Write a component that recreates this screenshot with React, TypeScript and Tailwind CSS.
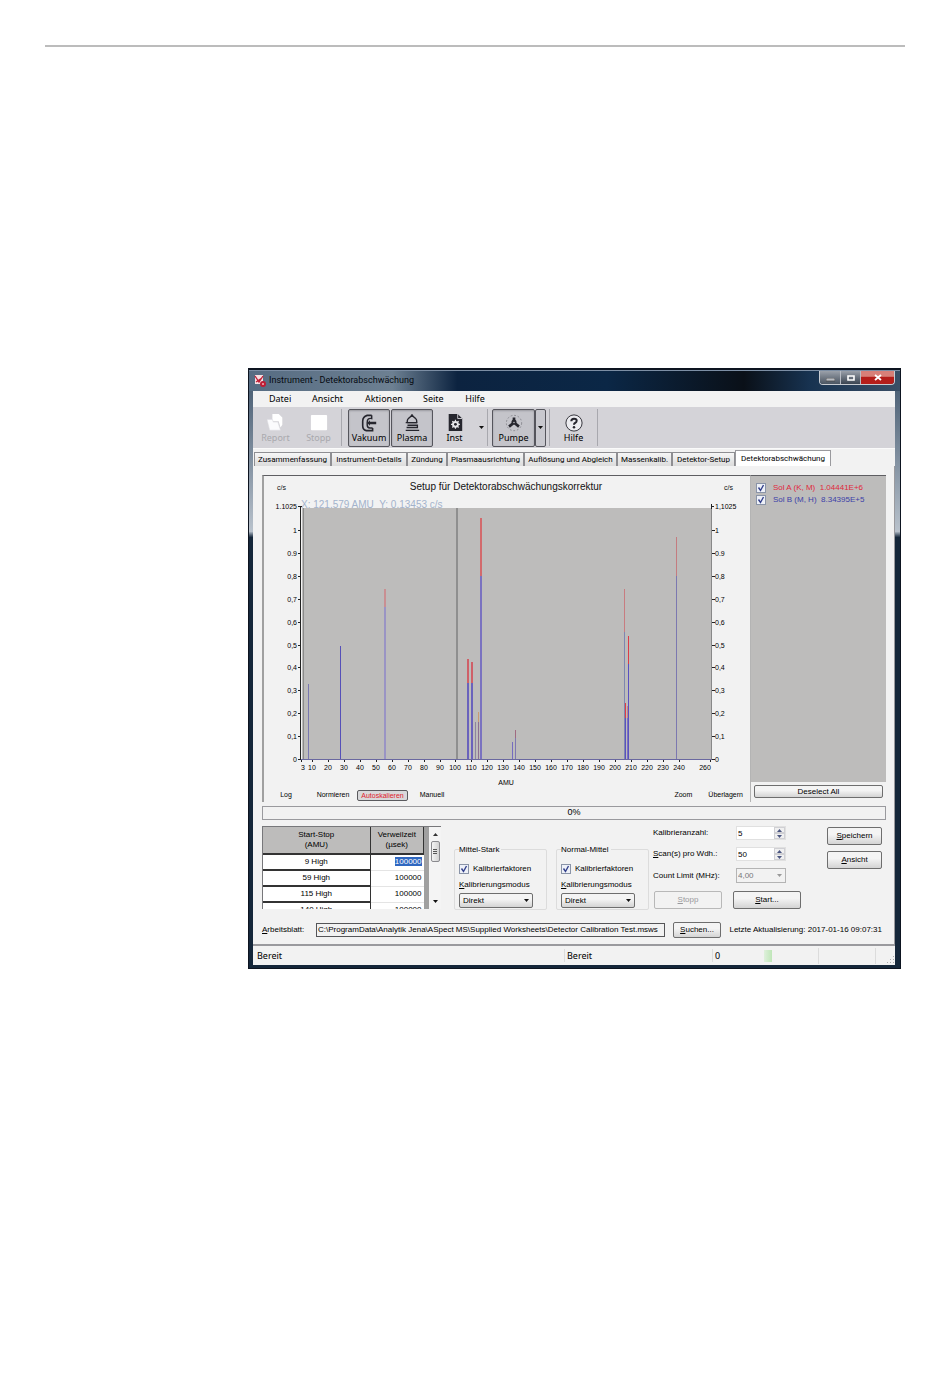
import React from "react";

const yTicks = ["0", "0,1", "0,2", "0,3", "0,4", "0,5", "0,6", "0,7", "0,8", "0.9", "1"];
const xTicks = [10, 20, 30, 40, 50, 60, 70, 80, 90, 100, 110, 120, 130, 140, 150, 160, 170, 180, 190, 200, 210, 220, 230, 240];

// x position, top of the red part, top of the blue part, line width, colours
const peaks: [number, number, number, number, string, string][] = [
  [44, 208, 208, 1, "#7a78a8", "#7a78b0"],
  [76, 170, 170, 1, "#4f48b4", "#5650b8"],
  [120, 113, 131, 2, "#c98f92", "#9a94c4"],
  [203, 183, 207, 2, "#cf6068", "#6a62bc"],
  [207, 186, 207, 2, "#cf6068", "#6a62bc"],
  [211, 246, 246, 1, "#8d84a0", "#8d84a0"],
  [214, 236, 246, 1, "#c99a72", "#8d6f90"],
  [216, 42, 100, 2, "#d26a6c", "#7a72c0"],
  [248, 266, 266, 1, "#756cc0", "#756cc0"],
  [251, 254, 262, 1, "#a06a80", "#8078b0"],
  [360, 113, 156, 1, "#c87c80", "#7f86b0"],
  [361, 227, 242, 1, "#e03c44", "#5a50c0"],
  [364, 160, 188, 1, "#dc3c48", "#5a50c0"],
  [363, 230, 242, 1, "#c88080", "#7a72c0"],
  [412, 61, 100, 1, "#c47c80", "#7c78b0"],
];

const xPos = (v: number) => Math.round(48 + (v - 10) * 1.594);
const yPos = (i: number) => Math.round(283 - i * 22.9);

function Chart() {
  return (
    <svg viewBox="0 0 486 313" className="block h-auto w-full" fontFamily="'Liberation Sans', Arial, sans-serif">
      <text x="242" y="14" fontSize="10" textAnchor="middle" fill="#111">Setup für Detektorabschwächungskorrektur</text>
      <text x="13" y="14" fontSize="7" fill="#111">c/s</text>
      <text x="460" y="14" fontSize="7" fill="#111">c/s</text>
      <text x="37" y="32" fontSize="10" fill="#a3b2cc" xmlSpace="preserve">X: 121.579 AMU  Y: 0.13453 c/s</text>
      <g shapeRendering="crispEdges">
        <rect x="38" y="32" width="410" height="252" fill="#bdbcbb" />
        <rect x="39" y="32" width="1" height="252" fill="#8a8a8a" />
        <rect x="192" y="32" width="2" height="252" fill="#8f8f8f" />
        {peaks.map(([x, top, mid, w, red, blue]) => (
          <g key={x}>
            <rect x={x} y={top} width={w} height={mid - top} fill={red} />
            <rect x={x} y={mid} width={w} height={283 - mid} fill={blue} />
          </g>
        ))}
        <rect x="36" y="30" width="1" height="254" fill="#222" />
        <rect x="447" y="32" width="1" height="252" fill="#888" />
        <rect x="36" y="283" width="412" height="1" fill="#6a68a0" />
        <rect x="34" y="30" width="4" height="1" fill="#222" />
        <rect x="447" y="30" width="3" height="1" fill="#222" />
        <rect x="447" y="28" width="1" height="5" fill="#222" />
        <rect x="37" y="284" width="1" height="2" fill="#222" />
        <rect x="446" y="284" width="1" height="2" fill="#222" />
      </g>
      <text x="33" y="33" fontSize="7" textAnchor="end" fill="#000">1.1025</text>
      <text x="451" y="33" fontSize="7" fill="#000">1,1025</text>
      {yTicks.map((t, i) => (
        <g key={t}>
          <rect x="34" y={yPos(i)} width="3" height="1" fill="#222" />
          <rect x="448" y={yPos(i)} width="3" height="1" fill="#222" />
          <text x="33" y={yPos(i) + 3} fontSize="7" textAnchor="end" fill="#000">{t}</text>
          <text x="451" y={yPos(i) + 3} fontSize="7" fill="#000">{t}</text>
        </g>
      ))}
      {xTicks.map((t) => (
        <g key={t}>
          <rect x={xPos(t)} y="284" width="1" height="2" fill="#222" />
          <text x={xPos(t)} y="294" fontSize="7" textAnchor="middle" fill="#000">{t}</text>
        </g>
      ))}
      <text x="39" y="294" fontSize="7" textAnchor="middle" fill="#000">3</text>
      <text x="441" y="294" fontSize="7" textAnchor="middle" fill="#000">260</text>
      <text x="242" y="309" fontSize="7" textAnchor="middle" fill="#000">AMU</text>
    </svg>
  );
}

function Check({ id, children, className = "" }: { id: string; children: React.ReactNode; className?: string }) {
  return (
    <label htmlFor={id} className={`flex items-center gap-1 whitespace-nowrap ${className}`}>
      <span className="relative block size-[10px] shrink-0">
        <input id={id} type="checkbox" defaultChecked className="block size-[10px] appearance-none border border-[#8a94a8] bg-[#eef1f8]" />
        <svg viewBox="0 0 10 10" className="pointer-events-none absolute inset-0 size-[10px]">
          <path d="M2.500 4.500L4.500 7.500L7.500 2" fill="none" stroke="#33408c" strokeWidth="1.400" />
        </svg>
      </span>
      {children}
    </label>
  );
}

function Btn({ children, className = "" }: { children: React.ReactNode; className?: string }) {
  return (
    <button className={`rounded-xs border border-[#6e6e6e] bg-linear-to-b from-[#f4f4f4] from-40% to-[#d4d4d4] text-center leading-none ${className}`}>
      {children}
    </button>
  );
}

function Group({ title, id }: { title: string; id: string }) {
  return (
    <fieldset className="relative mt-[23px] h-[61px] w-[93px] rounded-xs border border-[#dcdcdc] px-1 pt-[14px]">
      <legend className="absolute -top-[6px] left-1 bg-[#f2f2f2] pr-0.5 leading-3">{title}</legend>
      <Check id={`${id}-kf`} className="h-[10px]">Kalibrierfaktoren</Check>
      <label htmlFor={`${id}-mode`} className="mt-[5px] block leading-3">
        <u>K</u>alibrierungsmodus
      </label>
      <div className="relative mt-[2px] w-[74px]">
        <select id={`${id}-mode`} className="block h-[15px] w-full appearance-none rounded-xs border border-[#6e6e6e] bg-linear-to-b from-[#f4f4f4] from-40% to-[#d4d4d4] pl-[3px] leading-none">
          <option>Direkt</option>
        </select>
        <svg viewBox="0 0 5 3" className="pointer-events-none absolute top-[6px] right-1 h-[3px] w-[5px]"><path d="M0 0H5L2.5 3Z" fill="#111" /></svg>
      </div>
    </fieldset>
  );
}

function Spin({ id, value }: { id: string; value: string }) {
  return (
    <div className="flex h-[14px] w-[50px] border border-[#e0e0e0] bg-white">
      <input id={id} defaultValue={value} className="w-[37px] min-w-0 bg-transparent pl-px leading-none outline-none" />
      <div className="flex w-[11px] flex-col">
        <button aria-label="Mehr" className="flex flex-1 items-center justify-center border border-[#d0d0d4] bg-[#f0f0f0]">
          <svg viewBox="0 0 5 3" className="h-[3px] w-[5px]"><path d="M0 3H5L2.5 0Z" fill="#4a5580" /></svg>
        </button>
        <button aria-label="Weniger" className="flex flex-1 items-center justify-center border border-[#d0d0d4] bg-[#f0f0f0]">
          <svg viewBox="0 0 5 3" className="h-[3px] w-[5px]"><path d="M0 0H5L2.5 3Z" fill="#4a5580" /></svg>
        </button>
      </div>
    </div>
  );
}

function Tool({ label, children, className = "pt-[5px]" }: { label: string; children: React.ReactNode; className?: string }) {
  return (
    <button className={`flex h-[38px] flex-col items-center ${className}`}>
      <svg viewBox="0 0 20 20" className="size-[18px]">{children}</svg>
      <span className="leading-3">{label}</span>
    </button>
  );
}

function Sep({ className = "" }: { className?: string }) {
  return <div className={`h-[37px] w-px bg-[#a8a8ae] ${className}`} />;
}

function Arrow() {
  return <svg viewBox="0 0 5 3" className="h-[3px] w-[5px]"><path d="M0 0H5L2.5 3Z" fill="#111" /></svg>;
}

const pressed = "border border-[#55555c] rounded-xs bg-[#c4c4ca] shadow-[inset_0_1px_2px_#9a9aa0] pt-[4px]";

const tabs: [string, string][] = [
  ["Zusammenfassung", "w-[77px]"],
  ["Instrument-Details", "w-[76px]"],
  ["Zündung", "w-[40px]"],
  ["Plasmaausrichtung", "w-[77px]"],
  ["Auflösung und Abgleich", "w-[93px]"],
  ["Massenkalib.", "w-[55px]"],
  ["Detektor-Setup", "w-[63px]"],
];

const rows = ["9 High", "59 High", "115 High", "140 High"];

export default function App() {
  return (
    <div className="min-h-screen bg-white font-['Liberation_Sans',Arial,sans-serif] text-[8px] text-black">
      <header className="px-[45px] pt-[45px]">
        <hr className="border-0 border-t-2 border-[#bcbcbc]" />
      </header>

      <main className="mt-[321px] mr-[49px] ml-[248px] border border-t-2 border-[#0d1420] bg-linear-to-b from-[#41566c] from-0% via-[#b9c2cc] via-[27%] to-[#15273a] to-[28%] pr-[5px] pb-[3px] pl-[4px]">
        <div className="-mr-[5px] -ml-[4px] flex h-[21px] items-start justify-between border-t border-[#7c8ea4] bg-[linear-gradient(to_right,#566c82,#6d8092_22%,#0c2340_32%,#0b2746_55%,#0a1018_76%,#173250_86%,#3a4f66)]">
          <div className="flex h-[20px] items-center gap-[3px] pl-[5px] font-[Roboto,sans-serif] text-[9px]">
            <svg viewBox="0 0 12 12" className="size-3">
              <rect x="1" y="0" width="8" height="9" fill="#f6dfe2" />
              <path d="M1 1L5 7L9 1M2 7L8 3" fill="none" stroke="#c01c34" strokeWidth="1.3" />
              <circle cx="9" cy="9" r="3" fill="#c01c34" />
              <path d="M8 9H10" stroke="#fff" />
            </svg>
            <h1 className="whitespace-nowrap text-[#050a10]">Instrument - Detektorabschwächung</h1>
          </div>
          <div className="mr-[5px] flex h-[14px] overflow-hidden rounded-b border border-t-0 border-[#c8ccd2]">
            <button aria-label="Minimieren" className="flex w-[21px] items-center justify-center border-r border-[#b8bcc4] bg-linear-to-b from-[#9ba1aa] to-[#4b5562]">
              <svg viewBox="0 0 9 4" className="mt-1 h-1 w-[9px]"><path d="M0 0H9V3H0Z" fill="#b8bcc2" stroke="#444" strokeWidth=".7" /></svg>
            </button>
            <button aria-label="Maximieren" className="flex w-[20px] items-center justify-center border-r border-[#b8bcc4] bg-linear-to-b from-[#9ba1aa] to-[#3b4552]">
              <svg viewBox="0 0 8 6" className="h-[6px] w-2"><path d="M1 1H7V5H1Z" fill="none" stroke="#fff" strokeWidth="1.6" /></svg>
            </button>
            <button aria-label="Schließen" className="flex w-[33px] items-center justify-center bg-linear-to-b from-[#d88078] from-40% to-[#b41e1a] to-50%">
              <svg viewBox="0 0 8 7" className="h-[7px] w-2"><path d="M1 1L7 6M7 1L1 6" stroke="#fff" strokeWidth="1.8" /></svg>
            </button>
          </div>
        </div>

        <div className="bg-[#f2f2f2]">
          <nav className="flex h-4 items-center gap-[22px] pl-4 font-['Noto_Sans',sans-serif] text-[9px]">
            <button className="w-[21px] whitespace-nowrap">Datei</button>
            <button className="w-[31px] whitespace-nowrap">Ansicht</button>
            <button className="w-[36px] whitespace-nowrap">Aktionen</button>
            <button className="w-[20px] whitespace-nowrap">Seite</button>
            <button className="w-[20px] whitespace-nowrap">Hilfe</button>
          </nav>

          <div className="flex h-[41px] items-center bg-[#d4d3d8] pl-px font-['Noto_Sans',sans-serif] text-[9px]">
            <Tool label="Report" className="w-[43px] pt-[5px] text-[#a9a9ae]">
              <path d="M6 0H13L17 4V12L15 15L13 8H6Z" fill="#fff" />
              <path d="M0 6H6L7 9H12L15 18H3Z" fill="#fbfbfd" stroke="#dcdce0" strokeWidth=".6" />
            </Tool>
            <Tool label="Stopp" className="w-[43px] pt-[5px] text-[#a9a9ae]">
              <rect x="1" y="1" width="18" height="17" rx="1" fill="#fff" />
            </Tool>
            <Sep className="mr-[6px] ml-px" />
            <Tool label="Vakuum" className={`mr-px w-[42px] ${pressed}`}>
              <path d="M13 1.500H8Q3 3 3 8V13Q3 17.500 7 18.500H14V15.500" fill="none" stroke="#26262e" strokeWidth="1.800" />
              <path d="M13 1.500V5Q8 4 8 9.500V12Q8 15.500 11 15.500H14" fill="none" stroke="#26262e" strokeWidth="1.600" />
              <path d="M8 10L11 7V8.500H18V11.500H11V13Z" fill="#26262e" />
            </Tool>
            <Tool label="Plasma" className={`w-[42px] ${pressed}`}>
              <path d="M10 1Q9 3 6.500 4.500Q4 6.500 5 9.500H15Q16 6.500 13.500 4.500Q11 3 10 1Z" fill="none" stroke="#26262e" strokeWidth="1.500" />
              <path d="M3 9.500H16M5 12.500H16V15H4M3 18.200H18" fill="none" stroke="#26262e" strokeWidth="1.500" />
            </Tool>
            <Tool label="Inst" className="w-[43px] pt-[5px]">
              <path d="M3 0H13L18 5V19H3Z" fill="#26262e" />
              <path d="M13 0V5H18" fill="none" stroke="#d4d3d8" />
              <circle cx="10.500" cy="11.500" r="2.800" fill="none" stroke="#e6e6ea" strokeWidth="2" />
              <path d="M10.500 6.500V16.500M5.500 11.500H15.500M7 8L14 15M14 8L7 15" stroke="#e6e6ea" strokeWidth="1.300" />
              <circle cx="10.500" cy="11.500" r="1.600" fill="#26262e" />
            </Tool>
            <button aria-label="Inst-Menü" className="flex h-[38px] w-[10px] items-center justify-center"><Arrow /></button>
            <Sep className="mr-1 ml-px" />
            <Tool label="Pumpe" className={`w-[43px] ${pressed}`}>
              <circle cx="10" cy="10" r="8.500" fill="none" stroke="#77777e" strokeWidth=".8" strokeDasharray="2 2" />
              <path d="M10 4V9.500L4.500 14M10 9.500L15.500 14" fill="none" stroke="#26262e" strokeWidth="3" />
              <circle cx="10" cy="9" r="2.800" fill="#26262e" />
              <circle cx="10" cy="9.500" r=".8" fill="#c4c4ca" />
            </Tool>
            <button aria-label="Pumpe-Menü" className="flex h-[38px] w-[11px] items-center justify-center rounded-xs border border-[#55555c] bg-[#c8c8ce]"><Arrow /></button>
            <Sep className="ml-[3px]" />
            <Tool label="Hilfe" className="w-[47px] pt-[5px]">
              <circle cx="10" cy="10" r="9" fill="#ececf0" stroke="#26262e" />
              <path d="M7 8Q7 5.200 10 5.200Q13 5.200 13 7.600Q13 9.200 11.200 10Q10 10.600 10 12" fill="none" stroke="#26262e" strokeWidth="2.200" />
              <circle cx="10" cy="14.700" r="1.400" fill="#26262e" />
            </Tool>
            <Sep />
          </div>

          <div className="flex h-[18px] items-end border-t border-[#fafafa] pl-px font-[Roboto,sans-serif] text-[8px]">
            {tabs.map(([t, w]) => (
              <button key={t} className={`h-[14px] border border-b-0 border-[#8e8e92] bg-linear-to-b from-[#f6f6f6] to-[#dcdcdc] text-center leading-[14px] whitespace-nowrap ${w}`}>{t}</button>
            ))}
            <button className="h-4 w-[96px] border border-b-0 border-[#9a9a9e] bg-white leading-[14px] whitespace-nowrap">Detektorabschwächung</button>
          </div>

          <section className="border-r border-[#9a9a9e] pt-[9px] pr-[8px] pb-[6px] pl-[9px]">
            <div className="flex h-[327px]">
              <div className="flex min-w-0 flex-1 flex-col justify-between border-t border-r border-l-2 border-t-[#5e5e62] border-r-[#b4b4b4] border-l-[#a0a0a0]">
                <Chart />
                <div className="flex h-[13px] items-center pl-[10px] text-[7px]">
                  <button className="w-6">Log</button>
                  <button className="mr-1 ml-[15px] w-[40px]">Normieren</button>
                  <button className="h-[11px] w-[51px] rounded-xs border border-[#5a5a5e] bg-[#d8d8da] leading-none text-[#e0202c]">Autoskalieren</button>
                  <button className="ml-1 w-[40px]">Manuell</button>
                  <button className="mr-4 ml-auto">Zoom</button>
                  <button className="mr-[7px]">Überlagern</button>
                </div>
              </div>
              <aside className="flex w-[135px] flex-col border-t border-[#5e5e62]">
                <div className="flex flex-1 flex-col bg-[#bdbcbb] pt-[6px] pl-[5px]">
                  <Check id="sol-a" className="h-3 text-[#e0283c]"><span className="ml-[3px]">Sol A (K, M)&nbsp; 1.04441E+6</span></Check>
                  <Check id="sol-b" className="h-3 text-[#3c40a8]"><span className="ml-[3px]">Sol B (M, H)&nbsp; 8.34395E+5</span></Check>
                </div>
                <Btn className="mx-[3px] mt-[3px] mb-1 h-[13px]">Deselect All</Btn>
              </aside>
            </div>

            <div role="progressbar" aria-label="Fortschritt" aria-valuenow={0} className="mt-1 flex h-[14px] items-center justify-center border border-[#9a9a9e] text-[9px]">0%</div>

            <div className="mt-[6px] flex h-[84px] items-start">
              <div className="flex h-[83px] w-[179px] overflow-hidden border-t border-l border-[#77777a]">
                <table className="w-[161px] table-fixed border-collapse self-start text-center leading-none">
                  <thead>
                    <tr className="h-[27px] bg-[#bdbcbb]">
                      <th className="w-[107px] border-r border-b-2 border-[#333] p-0 leading-[10px] font-normal">Start-Stop<br />(AMU)</th>
                      <th className="border-r border-b-2 border-[#333] p-0 leading-[10px] font-normal">Verweilzeit<br />(µsek)</th>
                    </tr>
                  </thead>
                  <tbody>
                    {rows.map((r, i) => (
                      <tr key={r} className="h-4 bg-white">
                        <td className="border-r border-b-2 border-[#333] p-0">{r}</td>
                        <td className="border-b border-[#e4e4e4] p-0 pr-[2px] text-right">
                          <span className={i === 0 ? "bg-[#2f67c0] text-white" : ""}>100000</span>
                        </td>
                      </tr>
                    ))}
                  </tbody>
                </table>
                <div className="w-[5px] bg-[#a0a0a0]" />
                <div className="flex flex-1 flex-col items-center bg-[#f4f4f4] py-[6px]">
                  <svg viewBox="0 0 5 3" className="h-[3px] w-[5px]"><path d="M0 3H5L2.500 0Z" fill="#333" /></svg>
                  <div className="mt-[5px] flex h-[21px] w-[9px] flex-col items-center justify-center gap-px rounded-xs border border-[#8a8a8e] bg-linear-to-r from-[#f4f4f4] to-[#d2d2d2]">
                    <i className="h-px w-1 bg-[#555]" />
                    <i className="h-px w-1 bg-[#555]" />
                    <i className="h-px w-1 bg-[#555]" />
                  </div>
                  <div className="mt-auto"><Arrow /></div>
                </div>
              </div>

              <div className="ml-[13px] flex gap-[9px]">
                <Group title="Mittel-Stark" id="ms" />
                <Group title="Normal-Mittel" id="nm" />
              </div>

              <div className="ml-1">
                <div className="grid grid-cols-[83px_50px] gap-y-[7px]">
                  <label htmlFor="anz" className="leading-[14px]">Kalibrieranzahl:</label>
                  <Spin id="anz" value="5" />
                  <label htmlFor="scan" className="leading-[14px]"><u>S</u>can(s) pro Wdh.:</label>
                  <Spin id="scan" value="50" />
                  <label htmlFor="limit" className="leading-4">Count Limit (MHz):</label>
                  <div className="relative">
                    <select id="limit" disabled className="block h-[15px] w-full appearance-none border border-[#b4b4b4] bg-[#f2f2f2] pl-px leading-none text-[#77777a]">
                      <option>4,00</option>
                    </select>
                    <svg viewBox="0 0 5 3" className="pointer-events-none absolute top-[6px] right-1 h-[3px] w-[5px]"><path d="M0 0H5L2.500 3Z" fill="#999" /></svg>
                  </div>
                </div>
                <div className="mt-[7px] flex gap-[11px] pl-px">
                  <button disabled className="h-[18px] w-[68px] rounded-xs border border-[#b8b8b8] leading-none text-[#99999c]"><u>S</u>topp</button>
                  <Btn className="h-[18px] w-[68px]"><u>S</u>tart...</Btn>
                </div>
              </div>

              <div className="mt-px mr-1 ml-auto flex flex-col gap-[6px]">
                <Btn className="h-[18px] w-[55px]"><u>S</u>peichern</Btn>
                <Btn className="h-[18px] w-[55px]"><u>A</u>nsicht</Btn>
              </div>
            </div>

            <div className="mt-[11px] flex h-[17px] items-center">
              <label htmlFor="blatt" className="w-[54px]"><u>A</u>rbeitsblatt:</label>
              <input id="blatt" readOnly value={"C:\\ProgramData\\Analytik Jena\\ASpect MS\\Supplied Worksheets\\Detector Calibration Test.msws"} className="h-[14px] w-[349px] min-w-0 border border-[#555558] bg-[#f2f2f2] px-px leading-none outline-none" />
              <Btn className="ml-2 h-[16px] w-[48px]"><u>S</u>uchen...</Btn>
              <span className="ml-auto pr-1 whitespace-nowrap">Letzte Aktualisierung: 2017-01-16 09:07:31</span>
            </div>
          </section>

          <footer className="flex h-[21px] items-center border-t-2 border-[#9a9a9e] font-['Noto_Sans',sans-serif] text-[9px]">
            <span className="w-[311px] pl-1">Bereit</span>
            <span className="w-[148px] border-l border-[#dcdcdc] pl-[2px]">Bereit</span>
            <span className="w-[52px] border-l border-[#dcdcdc] pl-[2px]">0</span>
            <i className="h-3 w-2 bg-linear-to-r from-[#dff0dc] to-[#bfe6b8]" />
            <i className="ml-[46px] h-4 w-[58px] border-x border-[#dcdcdc]" />
            <svg viewBox="0 0 8 8" className="mt-2 ml-auto size-2"><path d="M6 0h1v1h-1zM6 3h1v1h-1zM3 3h1v1h-1zM0 6h1v1h-1zM3 6h1v1h-1zM6 6h1v1h-1z" fill="#aaa" /></svg>
          </footer>
        </div>
      </main>
    </div>
  );
}
